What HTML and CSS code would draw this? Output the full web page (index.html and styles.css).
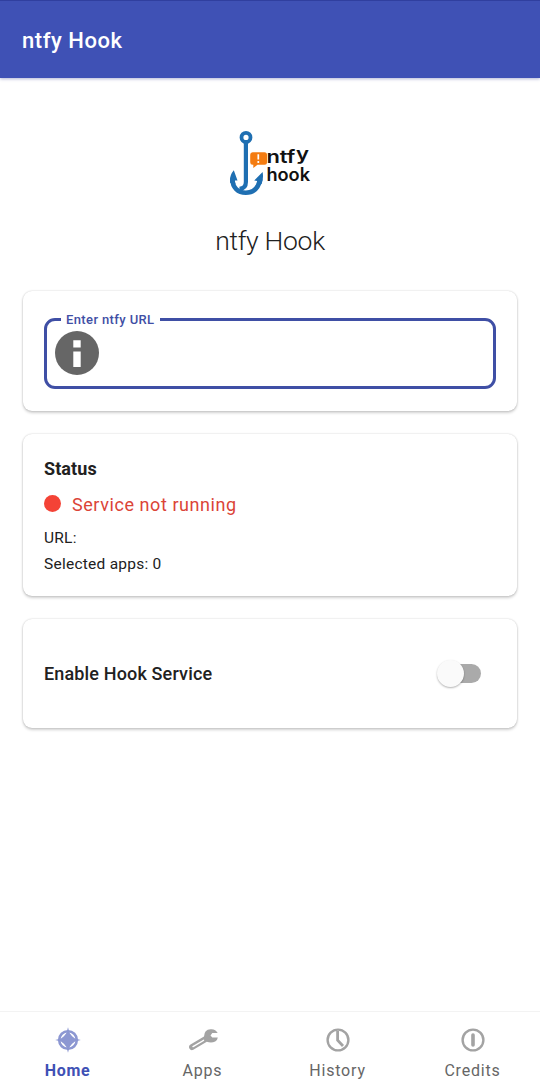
FILE: index.html
```html
<!DOCTYPE html>
<html lang="en">
<head>
<meta charset="utf-8">
<title>ntfy Hook</title>
<link rel="stylesheet" href="styles.css">
</head>
<body>
<div class="app">
  <header class="bar"><h1 class="bar-title">ntfy Hook</h1></header>
  <main class="content">
    <svg class="logo" viewBox="0 0 100 85" role="img" aria-label="ntfy hook">
      <g fill="none" stroke="#1f6fb2">
        <circle cx="26" cy="17.4" r="4.5" stroke-width="3.8"/>
        <path d="M25.9 22V62C25.9 66.5 23.5 68.6 19.5 68.8" stroke-width="4.2"/>
        <path d="M12.4 59C12.4 67.5 18 72.7 25.8 72.7C33.5 72.7 38.5 68 40.3 59" stroke-width="4.6"/>
      </g>
      <path d="M13.8 50.3L17.5 60.5L14.8 60.5L15.5 64L10.2 63Q9 56 13.8 50.3ZM42.6 52L34.2 60.5L37.2 61L36.3 65L41.6 64Q43.8 58 42.6 52Z" fill="#1f6fb2"/>
      <path d="M32.6 32.2H44.5Q47 32.2 47 34.7V42.3Q47 44.8 44.5 44.8H37.5L33.3 48V44.8H32.6Q30.2 44.8 30.2 42.3V34.7Q30.2 32.2 32.6 32.2Z" fill="#f47c11"/>
      <path d="M38.3 34.2V39.4M38.3 41V43" stroke="#fff" stroke-width="1.7"/>
      <g class="logo-text">
        <text x="46.4" y="43.3" textLength="29" lengthAdjust="spacingAndGlyphs">ntf</text>
        <text x="76" y="40.2" textLength="13" lengthAdjust="spacingAndGlyphs">y</text>
        <text x="46.4" y="61.3" textLength="43.7" lengthAdjust="spacingAndGlyphs">hook</text>
      </g>
    </svg>
    <h2 class="name">ntfy Hook</h2>
    <section class="card card-url">
      <fieldset class="field">
        <legend class="field-label">Enter ntfy URL</legend>
        <svg class="info" viewBox="0 0 44 44"><circle cx="22" cy="22" r="22" fill="#666"/><path d="M18.3 9.3H25.7V16.5H18.3ZM18.3 20.5H25.7V36H18.3Z" fill="#fff"/></svg>
      </fieldset>
    </section>
    <section class="card card-status">
      <h3 class="heading">Status</h3>
      <p class="state"><span class="dot"></span>Service not running</p>
      <p class="detail">URL:</p>
      <p class="detail">Selected apps: 0</p>
    </section>
    <section class="card card-switch">
      <span class="switch-label">Enable Hook Service</span>
      <span class="switch"><span class="thumb"></span></span>
    </section>
  </main>
  <nav class="tabs">
    <a class="tab active"><svg class="icon" viewBox="0 0 28 28"><circle cx="14" cy="14" r="8.8" fill="none" stroke="currentColor" stroke-width="2.6"/><path d="M14 1.2L15.6 7L21 14L15.6 21L14 26.8L12.4 21L7 14L12.4 7ZM1.2 14L7 12.4L14 7L21 12.4L26.8 14L21 15.6L14 21L7 15.6Z"/></svg><span>Home</span></a>
    <a class="tab"><svg class="icon wrench" viewBox="0 0 30 28"><path d="M16 10.5L2.5 18.4Q.2 20 1.4 22.5Q2.8 25 5.3 23.8L18.8 15.8Q23.5 17.2 27.2 15.5Q29.5 14.2 29.8 11.4H24.3L22.5 9.6L24.3 7H29.7Q27.5 2.7 22.5 3.2Q16.2 3.5 16 10.5ZM15.8 13.6Q17 14 15.8 15L5.8 20.9Q4.3 21.5 4.2 20.5L5 19.7Z" fill-rule="evenodd"/></svg><span>Apps</span></a>
    <a class="tab"><svg class="icon" viewBox="0 0 28 28"><circle cx="14" cy="14" r="10.4" fill="none" stroke="currentColor" stroke-width="2.4"/><path d="M13.6 5V14.3L19 20" fill="none" stroke="currentColor" stroke-width="2.8"/></svg><span>History</span></a>
    <a class="tab"><svg class="icon" viewBox="0 0 28 28"><circle cx="14" cy="14" r="10.4" fill="none" stroke="currentColor" stroke-width="2.4"/><path d="M14 9V19" stroke="currentColor" stroke-width="3.6" stroke-linecap="round"/></svg><span>Credits</span></a>
  </nav>
</div>
</body>
</html>
```
FILE: styles.css
```css
* { box-sizing: border-box; }
body, h1, h2, h3, p { margin: 0; }
body { font-family: Roboto, "Noto Sans", sans-serif; background: #fff; color: #212121; }
.app { height: 1089px; display: flex; flex-direction: column; }
.bar { height: 78px; padding: 3px 22px 0; display: flex; align-items: center; background: #3f51b5; border-top: 1px solid #303f9f; box-shadow: 0 1px 3px rgba(60, 70, 150, .4); }
.bar-title { font-size: 22px; line-height: 26px; font-weight: 500; color: #fff; letter-spacing: .55px; }
.content { flex: 1; display: flex; flex-direction: column; padding: 42px 23px 0; }
.logo { width: 100px; height: 85px; align-self: center; }
.logo-text { font: 600 18px Inter, sans-serif; fill: #111; }
.name { margin-top: 19px; height: 33px; line-height: 33px; text-align: center; font-size: 26.5px; font-weight: 300; letter-spacing: -.3px; }
.card { border-radius: 9px; background: #fff; box-shadow: 0 0 2px rgba(0, 0, 0, .2), 0 2px 3px rgba(0, 0, 0, .18); }
.card-url { height: 120px; margin-top: 34px; padding: 20px 21px 0; }
.field { height: 78px; margin: 0; padding: 0 8px; border: 3px solid #3f4fa5; border-radius: 11px; min-width: 0; }
.field-label { height: 16px; line-height: 18px; margin-left: 6px; padding: 0 6px 0 5px; font-size: 13px; font-weight: 500; letter-spacing: .38px; color: #3f4fa5; }
.info { display: block; width: 44px; height: 44px; margin-top: 4px; }
.card-status { height: 162px; margin-top: 23px; padding: 23px 21px; }
.heading { font-size: 18px; line-height: 24px; font-weight: 700; letter-spacing: .1px; }
.state { display: flex; align-items: center; margin-top: 11px; height: 24px; font-size: 18px; letter-spacing: .57px; color: #db4437; }
.dot { width: 17px; height: 17px; margin: 0 11px 2px 0; border-radius: 50%; background: #f44336; }
.detail { font-size: 15.5px; line-height: 26px; letter-spacing: .25px; }
.state + .detail { margin-top: 9px; }
.card-switch { height: 109px; margin-top: 23px; padding: 0 36px 1px 21px; display: flex; align-items: center; justify-content: space-between; }
.switch-label { font-size: 18px; font-weight: 500; letter-spacing: .15px; }
.switch { width: 44px; height: 19px; display: flex; align-items: center; border-radius: 10px; background: linear-gradient(90deg, transparent 12px, #aaa 12px); }
.thumb { width: 27px; height: 27px; border-radius: 50%; background: #fafafa; box-shadow: 0 1px 2px rgba(0, 0, 0, .3); }
.tabs { height: 78px; display: grid; grid-template-columns: repeat(4, 1fr); border-top: 1px solid #f3f3f3; }
.tab { display: flex; flex-direction: column; align-items: center; padding-top: 14px; font-size: 16px; line-height: 23px; letter-spacing: .8px; color: #666; }
.icon { width: 28px; height: 28px; margin: 0 0 5px; fill: currentColor; color: #a3a3a3; }
.wrench { width: 30px; }
.active { font-weight: 700; color: #3f51b5; letter-spacing: .7px; }
.active .icon { color: #8c97d2; }
```
